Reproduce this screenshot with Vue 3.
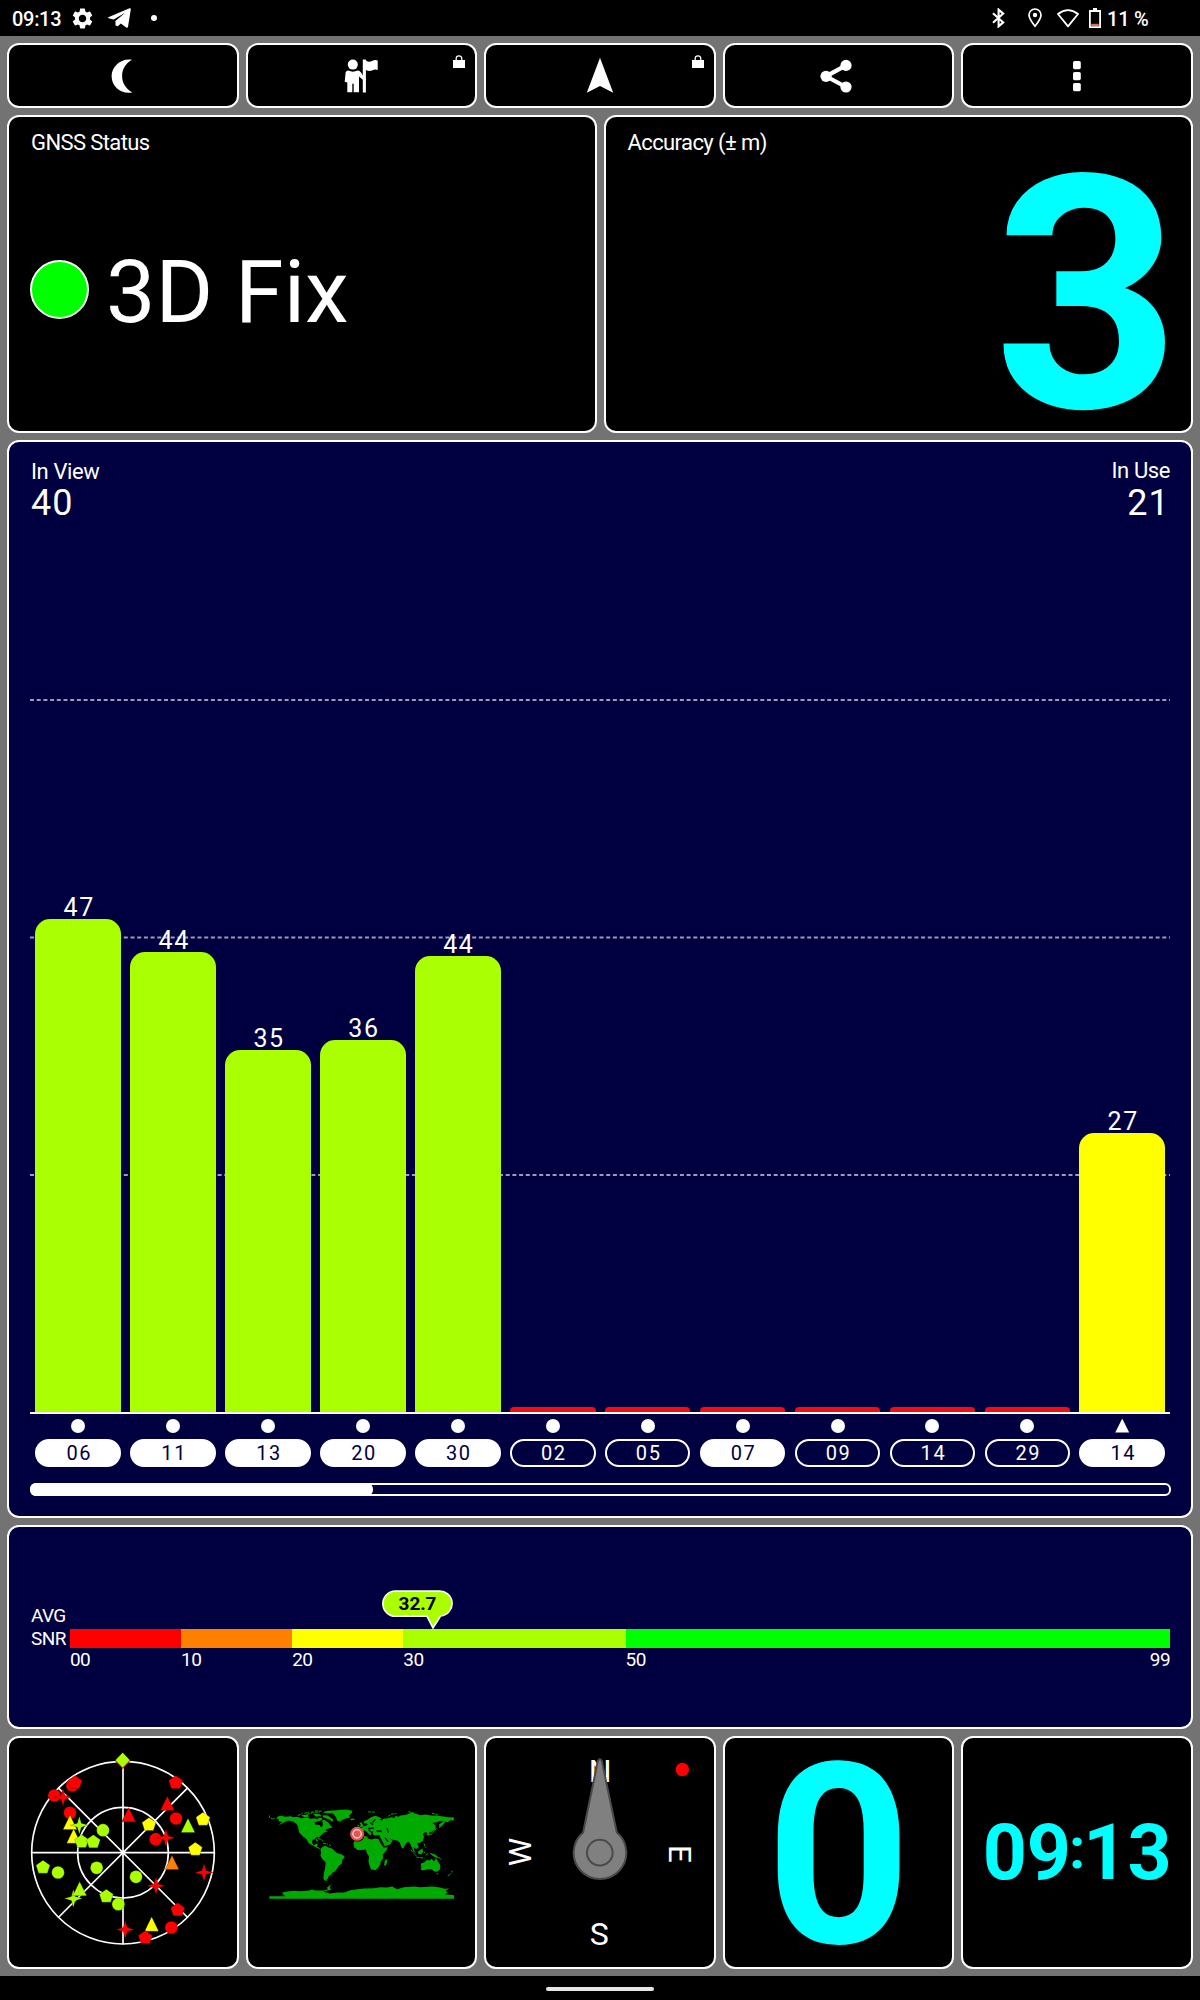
<script setup>
import { computed } from 'vue';

// satellites currently scrolled into view
const satellites = [
  { id: '06', snr: 47, height: 493, used: true },
  { id: '11', snr: 44, height: 460, used: true },
  { id: '13', snr: 35, height: 362, used: true },
  { id: '20', snr: 36, height: 372, used: true },
  { id: '30', snr: 44, height: 456, used: true },
  { id: '02', height: 5 },
  { id: '05', height: 5 },
  { id: '07', height: 5, used: true },
  { id: '09', height: 5 },
  { id: '14', height: 5 },
  { id: '29', height: 5 },
  { id: '14', snr: 27, height: 279, used: true, shape: 'tri' },
];

const gridLines = [1, 238.5, 476];

const segments = [
  { from: '00', size: 10, color: '#ff0000' },
  { from: '10', size: 10, color: '#ff8000' },
  { from: '20', size: 10, color: '#ffff00' },
  { from: '30', size: 20, color: '#aaff00' },
  { from: '50', size: 49, color: '#00ff00', to: '99' },
];

const shapes = {
  circle: 'M0-19A19 19 0 1 1 0 19A19 19 0 1 1 0-19Z',
  pent: 'M0-21L21-6L13 18H-13L-21-6Z',
  tri: 'M0-23L21 20H-21Z',
  star: 'M0-27L6-6L27 0L6 6L0 27L-6 6L-27 0L-6-6Z',
  diamond: 'M0-23L22 0L0 23L-22 0Z',
};

const R = '#ff0000';
const G = '#aaff00';
const Y = '#ffff00';

const sky = [
  ['diamond', 368, 108, R], ['diamond', 368, 105, G],
  ['circle', 217, 181, R], ['pent', 225, 172, R], ['circle', 163, 211, R], ['star', 189, 216, R],
  ['circle', 210, 263, R], ['tri', 210, 293, Y], ['tri', 221, 334, Y], ['star', 238, 300, G],
  ['circle', 309, 315, G], ['pent', 245, 349, G], ['pent', 280, 350, G], ['tri', 386, 270, R],
  ['pent', 527, 172, R], ['tri', 502, 236, R], ['circle', 528, 280, R], ['pent', 609, 282, Y],
  ['tri', 564, 302, G], ['pent', 447, 298, Y], ['circle', 467, 342, R], ['star', 498, 338, R],
  ['pent', 586, 372, Y], ['tri', 516, 413, '#ff8000'], ['star', 612, 442, R], ['star', 468, 482, R],
  ['circle', 408, 455, G], ['circle', 290, 428, G], ['circle', 174, 442, G], ['pent', 129, 426, G],
  ['star', 220, 520, G], ['tri', 239, 492, G], ['pent', 319, 513, G], ['circle', 355, 537, G],
  ['star', 376, 613, R], ['tri', 455, 598, Y], ['pent', 436, 637, R], ['circle', 514, 607, R],
  ['pent', 533, 554, R],
];

const skyMarks = computed(() => sky.map(([shape, x, y, color]) => ({
  d: shapes[shape],
  transform: `translate(${x} ${y})`,
  color,
})));

function barColor(sat) {
  if (!sat.snr) return '#f00c10';
  return sat.snr < 30 ? Y : G;
}
</script>

<template>
  <div class="screen">
    <header class="status">
      <span class="time">09:13</span>
      <svg class="s-gear" viewBox="0 0 24 24"><path fill="#fff" d="M19.14 12.94c.04-.3.06-.61.06-.94 0-.32-.02-.64-.07-.94l2.03-1.58a.49.49 0 0 0 .12-.61l-1.92-3.32a.488.488 0 0 0-.59-.22l-2.39.96c-.5-.38-1.03-.7-1.62-.94l-.36-2.54a.484.484 0 0 0-.48-.41h-3.84c-.24 0-.43.17-.47.41l-.36 2.54c-.59.24-1.13.57-1.62.94l-2.39-.96c-.22-.08-.47 0-.59.22L2.74 8.87c-.12.21-.08.47.12.61l2.03 1.58c-.05.3-.09.63-.09.94s.02.64.07.94l-2.03 1.58a.49.49 0 0 0-.12.61l1.92 3.32c.12.22.37.29.59.22l2.39-.96c.5.38 1.03.7 1.62.94l.36 2.54c.05.24.24.41.48.41h3.84c.24 0 .44-.17.47-.41l.36-2.54c.59-.24 1.13-.56 1.62-.94l2.39.96c.22.08.47 0 .59-.22l1.92-3.32c.12-.22.07-.47-.12-.61l-2.01-1.58zM12 15.6c-1.98 0-3.6-1.62-3.6-3.6s1.62-3.6 3.6-3.6 3.6 1.62 3.6 3.6-1.62 3.6-3.6 3.6z"/></svg>
      <svg class="s-plane" viewBox="0 0 23 20"><path fill="#fff" d="M.3 9.2L21.5.3Q23 0 22.8 1.4L20 18.8Q19.6 20.2 18.3 19.4L12.8 15.4L9.8 18.3L7.6 17.4L7.4 13L17.5 4.4L5.7 11.6L.5 10.2Q-.2 9.7.3 9.2Z"/></svg>
      <i class="s-dot"></i>
      <span class="grow"></span>
      <svg class="s-bt" viewBox="0 0 13 20"><path fill="none" stroke="#fff" stroke-width="2.1" d="M1 5.2L11.2 14.4L6.6 18.4V1.6L11.2 5.6L1 14.8"/></svg>
      <svg class="s-pin" viewBox="0 0 14 20"><path fill="none" stroke="#fff" stroke-width="1.7" d="M7 18.2C4 14.5 1 10.7 1 7A6 6 0 0 1 13 7C13 10.7 10 14.5 7 18.2Z"/><circle cx="7" cy="7" r="2.2" fill="#fff"/></svg>
      <svg class="s-wifi" viewBox="0 0 22 19"><path fill="none" stroke="#fff" stroke-width="1.8" stroke-linejoin="round" d="M1 5Q11-2.8 21 5L11 17.4Z"/></svg>
      <svg class="s-bat" viewBox="0 0 12 20"><path fill="#fff" d="M4 0H8V2H12V20H0V2H4ZM1.8 4V18.2H10.2V4Z"/><rect x="2.2" y="15.8" width="7.6" height="2.2" fill="#d9705a"/></svg>
      <span class="battery">11 %</span>
    </header>

    <main class="board">
      <nav class="row five">
        <button class="panel tool">
          <svg class="icon" viewBox="-24 -24 48 48"><path d="M9-16.2C-2.6-18-11.4-9-11.4.2C-11.4 10.4-2 18.4 9.2 16.4C2.2 12.2-.9 6.4-.9 0S2.2-12.2 9-16.2Z"/></svg>
        </button>
        <button class="panel tool">
          <svg class="icon" viewBox="-24 -24 48 48">
            <circle cx="-8.2" cy="-11.4" r="5"/>
            <path d="M-12.8-5.4Q-8-3.2-3.5-5.4Q-1.2-5.4.2-3.2L1.8-.5V-16.5H4.9V-15.6Q8-13.4 11-15Q14-16.6 16.7-15.4V-6Q14-7.2 11-5.4Q8-4.4 4.9-6V2.2Q5.4 3.2 4.9 4V16.4H1.8V3.8L-2 .4V16.2H-7.3V7.8H-8.7V16.2H-13.7V6.4L-16.3 5.8L-15.4-3.5Q-14.7-5.4-12.8-5.4Z"/>
          </svg>
          <svg class="lock" viewBox="0 0 12 13"><path d="M0 5H12V13H0Z"/><path class="shackle" d="M3.2 6V3.7Q3.2.8 6 .8T8.8 3.7V6"/></svg>
        </button>
        <button class="panel tool">
          <svg class="icon" viewBox="-24 -24 48 48"><path d="M0-18.2L13.2 16.8L0 10L-13.2 16.8Z"/></svg>
          <svg class="lock" viewBox="0 0 12 13"><path d="M0 5H12V13H0Z"/><path class="shackle" d="M3.2 6V3.7Q3.2.8 6 .8T8.8 3.7V6"/></svg>
        </button>
        <button class="panel tool">
          <svg class="icon" viewBox="-24 -24 48 48">
            <path class="line" d="M7-10.6L-13 .3L7 11"/>
            <circle cx="7" cy="-10.6" r="5.6"/><circle cx="-13" cy=".3" r="5.6"/><circle cx="7" cy="11" r="5.6"/>
          </svg>
        </button>
        <button class="panel tool">
          <svg class="icon" viewBox="-24 -24 48 48">
            <rect x="-4" y="-15" width="7.8" height="8.2" rx="1.6"/><rect x="-4" y="-4" width="7.8" height="8.2" rx="1.6"/><rect x="-4" y="7" width="7.8" height="8.2" rx="1.6"/>
          </svg>
        </button>
      </nav>

      <section class="row two">
        <div class="panel gnss">
          <div class="label">GNSS Status</div>
          <div class="fix"><i class="lamp"></i><span>3D Fix</span></div>
        </div>
        <div class="panel accuracy">
          <div class="label">Accuracy (± m)</div>
          <div class="metres">3</div>
        </div>
      </section>

      <section class="panel navy sats">
        <div class="counts">
          <div>
            <div class="c-label">In View</div>
            <div class="c-num">40</div>
          </div>
          <div class="right">
            <div class="c-label use">In Use</div>
            <div class="c-num">21</div>
          </div>
        </div>

        <div class="chart">
          <svg class="grid" viewBox="0 0 1140 712" preserveAspectRatio="none">
            <line v-for="y in gridLines" :key="y" x1="0" x2="1140" :y1="y" :y2="y"/>
          </svg>
          <div v-for="(s, i) in satellites" :key="i" class="col">
            <span v-if="s.snr" class="val">{{ s.snr }}</span>
            <div class="bar" :class="{ empty: !s.snr }" :style="{ height: s.height + 'px', background: barColor(s) }"></div>
          </div>
        </div>

        <div class="ids">
          <div v-for="(s, i) in satellites" :key="i" class="sat">
            <i :class="s.shape || 'dot'"></i>
            <span class="pill" :class="{ used: s.used }">{{ s.id }}</span>
          </div>
        </div>

        <div class="scroll"><div class="thumb"></div></div>
      </section>

      <section class="panel navy snr">
        <div class="snr-name"><div>AVG</div><div>SNR</div></div>
        <div class="scale">
          <div class="balloon">
            <svg viewBox="0 0 72 40"><path d="M14.5 1H57.5A12.5 12.5 0 0 1 59.6 26L52 37.8L46 26.3H14.5A12.6 12.6 0 0 1 14.5 1Z"/></svg>
            <span>32.7</span>
          </div>
          <div v-for="g in segments" :key="g.from" class="seg" :style="{ flexGrow: g.size }">
            <div class="fill" :style="{ background: g.color }"></div>
            <div class="ticks"><span>{{ g.from }}</span><span v-if="g.to">{{ g.to }}</span></div>
          </div>
        </div>
      </section>

      <section class="row five">
        <div class="panel tile">
          <svg viewBox="27 38.5 682.8 687">
            <g class="radar">
              <circle cx="369" cy="382.5" r="274"/><circle cx="369" cy="382.5" r="136"/>
              <path d="M369 108V657M95 382.5H643M175 188L563 577M563 188L175 577"/>
            </g>
            <path v-for="(m, i) in skyMarks" :key="i" class="mark" :d="m.d" :transform="m.transform" :fill="m.color"/>
          </svg>
        </div>

        <div class="panel tile">
          <svg viewBox="22.8 38.5 682.8 687">
            <g class="land">
              <path d="M108 280L112 274L122 272L135 275L152 273L158 276L172 275L182 279L200 277L210 281L222 279L230 282L238 277L246 280L243 286L232 288L222 292L226 299L236 299L243 306L247 300L247 293L244 287L252 284L258 288L266 294L271 302L276 307L262 311L254 315L262 319L250 323L244 329L235 336L229 341L232 347L231 352L225 343L217 344L215 353L220 360L228 356L232 357L230 365L236 368L243 373L232 369L222 364L210 357L203 352L200 344L187 333L176 322L173 305L168 296L158 289L145 286L135 289L122 297L114 299L126 291L114 288L116 283Z"/>
              <path d="M245 261L262 257L290 255L310 253L322 254L336 257L334 264L325 272L331 276L314 281L303 286L298 290L290 286L287 276L278 265L262 264Z"/>
              <path d="M246 270L262 271L270 277L280 284L275 290L268 284L256 279L248 276ZM182 270L200 268L207 274L192 276ZM218 266L238 267L244 273L226 274Z"/>
              <path d="M240 372L247 364L256 362L262 366L275 370L284 378L288 383L304 388L312 393L310 400L305 406L304 416L296 421L290 430L284 438L276 443L272 449L264 454L263 460L258 464L263 467L252 466L249 460L250 445L254 430L256 412L247 403L240 392L242 382Z"/>
              <path d="M342 348L349 340L352 334L370 332L380 334L383 340L392 343L404 340L414 341L419 353L427 363L430 367L442 366L438 376L427 388L428 400L421 408L420 418L411 430L404 435L392 433L387 420L384 408L386 395L379 383L377 374L366 374L352 375L341 366L339 355ZM433 407L441 401L440 412L436 422L431 420Z"/>
              <path d="M345 332L344 322L356 322L360 315L352 311L362 309L371 303L380 300L382 297L376 294L372 296L370 289L382 283L392 276L404 272L414 275L424 281L416 284L424 286L430 280L440 280L452 276L463 278L466 272L474 275L480 271L488 270L500 268L512 263L528 266L540 270L556 268L572 271L590 272L610 274L625 276L641 277L640 286L630 285L622 291L616 289L606 300L597 309L596 298L610 288L600 287L588 292L576 293L586 302L585 312L574 320L566 321L568 330L562 330L560 322L552 322L547 327L551 334L548 346L540 352L530 355L535 364L530 371L524 370L519 365L522 376L527 384L520 380L514 366L508 353L503 350L494 358L489 371L483 366L478 352L470 346L456 344L446 338L456 347L450 357L432 363L424 350L417 337L420 331L410 330L401 331L396 325L399 319L391 318L388 314L383 314L394 325L389 331L378 319L372 316L366 322L358 330L350 334Z"/>
              <path d="M356 306L361 300L357 293L363 291L368 300L370 305ZM350 302L356 299L355 305ZM330 281L342 280L342 284L332 285Z"/>
              <path d="M541 416L552 411L560 404L568 406L572 401L582 408L587 398L592 408L600 420L599 432L590 440L580 438L574 432L560 432L548 436L541 434L543 426ZM588 444L594 444L591 449ZM532 380L546 370L548 380L543 387L534 386ZM568 383L584 388L598 399L586 397L574 390Z"/>
              <path d="M87 513L134 513L124 503L140 499L160 497L180 498L207 496L215 493L225 496L250 496L262 493L260 487L272 479L268 487L272 494L248 499L268 505L290 502L312 502L330 495L350 492L370 490L400 489L420 486L440 487L455 484L470 492L490 486L520 484L540 486L575 484L600 487L612 491L627 490L616 496L622 502L614 507L630 509L641 510L641 521L87 521Z"/>
            </g>
            <path class="coast" d="M87 271V277L96 281L104 279M172 271L186 265M192 264L206 261M200 268L216 263M212 261H238M224 257L244 258M232 340L243 343L248 349M248 354L262 357M266 358L272 362M383 260L404 261M443 274L452 267L468 265M504 260L520 263M575 265L592 268M558 329L574 327L580 318M582 316L590 308M602 302L606 291M551 355L555 368M511 374L518 382L529 393M528 396L552 399M550 384L554 380M556 390L562 384M622 453L630 447L634 444M633 437L638 441M596 396L602 404M262 488L273 478"/>
            <path class="sea" d="M418 338L431 362M434 338L444 350M408 317L424 319M440 309L444 323M397 292L405 282M224 342L232 336M384 310L400 309M390 293L398 298"/>
            <circle cx="352" cy="329" r="21" fill="#4a0e0e"/>
            <circle cx="350" cy="326" r="21" fill="#e15656"/>
            <circle cx="350" cy="326" r="12.5" fill="#e15656" stroke="#fff" stroke-width="3"/>
          </svg>
        </div>

        <div class="panel tile">
          <svg viewBox="18.6 38.5 682.8 687">
            <g class="compass">
              <text x="361" y="172">N</text>
              <text x="358" y="660">S</text>
              <text transform="translate(568 386) rotate(90)">E</text>
              <text transform="translate(153 381) rotate(-90)">W</text>
            </g>
            <circle cx="607.5" cy="133" r="20" fill="#f00"/>
            <path class="needle" d="M354 108Q360 97 366 108L411 322A79 79 0 1 1 310 322Z"/>
            <circle class="needle" cx="360" cy="382.5" r="38.5"/>
          </svg>
        </div>

        <div class="panel tile speed"><span>0</span></div>
        <div class="panel tile clock"><span>09</span><span class="colon">:</span><span>13</span></div>
      </section>
    </main>

    <footer class="navbar"><i></i></footer>
  </div>
</template>

<style>
body { margin: 0; background: #000; }
</style>

<style scoped>
* { box-sizing: border-box; }
.screen { width: 1200px; height: 2000px; display: flex; flex-direction: column; overflow: hidden; background: #000; color: #fff; font-family: Roboto, "Liberation Sans", sans-serif; }
svg { display: block; }
i { display: block; }

/* Status bar */
.status { height: 36px; flex: none; display: flex; align-items: center; padding: 0 51px 0 12px; font-size: 20px; font-weight: 500; }
.time { width: 59px; line-height: 36px; padding-top: 2px; letter-spacing: -.3px; }
.battery { width: 42px; margin-left: 6px; padding-top: 2px; white-space: nowrap; letter-spacing: -.2px; }
.grow { flex: 1; }
.s-gear { width: 25px; height: 25px; margin-left: -1px; }
.s-plane { width: 23px; height: 20px; margin-left: 13px; }
.s-dot { width: 6px; height: 6px; border-radius: 50%; background: #fff; margin-left: 20px; }
.s-bt { width: 13px; height: 20px; margin-right: 23px; }
.s-pin { width: 14px; height: 20px; margin-right: 15px; }
.s-wifi { width: 22px; height: 19px; margin-right: 10px; }
.s-bat { width: 12px; height: 20px; }

/* Board */
.board { height: 1940px; flex: none; background: #737373; padding: 7px; display: grid; grid-template-columns: 100%; grid-template-rows: 65px 317.5px 1078.5px 204px 233px; gap: 7px; }
.row { display: grid; gap: 7px; }
.five { grid-template-columns: repeat(5, minmax(0, 1fr)); }
.two { grid-template-columns: repeat(2, minmax(0, 1fr)); }
.panel { background: #000; border: 2px solid #fff; border-radius: 12px; min-width: 0; min-height: 0; }
.navy { background: #000040; }

/* Toolbar */
.tool { position: relative; display: flex; align-items: center; justify-content: center; padding: 0; }
.icon { width: 48px; height: 48px; fill: #fff; }
.icon .line { fill: none; stroke: #fff; stroke-width: 4.2; }
.lock { position: absolute; top: 10px; right: 10px; width: 12px; height: 13px; fill: #fff; }
.lock .shackle { fill: none; stroke: #fff; stroke-width: 1.3; }

/* GNSS and accuracy */
.label { font-size: 22px; line-height: 26px; letter-spacing: -.6px; padding: 13px 0 0 22px; }
.fix { display: flex; align-items: center; padding-left: 21px; height: 104px; margin-top: 82px; font-size: 88px; line-height: 104px; }
.fix span { margin-top: 4px; }
.lamp { width: 59px; height: 59px; border: 2px solid #fff; border-radius: 50%; background: #0f0; margin: -1px 17px 0 0; }
.metres { color: #0ff; font-size: 326px; line-height: 270px; height: 270px; font-weight: 700; text-align: right; padding-right: 10.5px; margin-top: 4.5px; }

/* Satellite chart */
.sats { padding: 0 21px; display: flex; flex-direction: column; }
.counts { display: flex; justify-content: space-between; height: 257.5px; padding: 17.5px 0 0 1px; }
.c-label { font-size: 22px; line-height: 26px; letter-spacing: -.4px; }
.c-num { font-size: 36px; line-height: 36px; letter-spacing: 1px; }
.right { text-align: right; }
.right .c-num { letter-spacing: 1.2px; }
.use { margin-top: -1px; margin-bottom: 1px; }
.chart { position: relative; display: flex; align-items: flex-end; height: 714.5px; border-bottom: 2px solid #fff; padding: 0 .4px 0 .8px; }
.grid { position: absolute; top: 0; left: 0; width: 100%; height: 712px; }
.grid line { stroke: #9c9cb8; stroke-width: 2; stroke-dasharray: 4 2.7; }
.col { position: relative; flex: 1 1 0; display: flex; flex-direction: column; align-items: center; }
.val { font-size: 25px; line-height: 26px; letter-spacing: 1.6px; padding-left: 2px; margin-bottom: -2px; }
.bar { width: 85.6px; border-radius: 15px 15px 0 0; }
.bar.empty { border-radius: 4px 4px 0 0; }
.ids { display: flex; height: 69px; padding: 5px .4px 0 .8px; }
.sat { flex: 1 1 0; display: flex; flex-direction: column; align-items: center; gap: 6px; }
.dot { width: 14px; height: 14px; border-radius: 50%; background: #fff; }
.tri { width: 14px; height: 14px; background: #fff; clip-path: polygon(50% 0, 100% 100%, 0 100%); }
.pill { width: 85.6px; height: 28px; border: 2px solid #fff; border-radius: 14px; text-align: center; font-size: 20px; line-height: 25px; letter-spacing: 1.6px; padding-left: 2px; }
.pill.used { background: #fff; color: #000040; }
.scroll { height: 13px; border: 2px solid #fff; border-radius: 6px; margin: 0 -.5px; }
.thumb { width: 343px; height: 13px; margin: -2px; border-radius: 6px; background: #fff; }

/* SNR scale */
.snr { display: flex; padding: 0 21px 0 22px; font-size: 19px; }
.snr-name { width: 39px; line-height: 23px; padding-top: 76.5px; letter-spacing: -.6px; }
.scale { position: relative; flex: 1; display: flex; padding-top: 102px; }
.seg { flex: 1 1 0; }
.fill { height: 19px; }
.ticks { display: flex; justify-content: space-between; line-height: 24px; letter-spacing: -.6px; }
.balloon { position: absolute; left: 311px; top: 63px; width: 72px; height: 40px; }
.balloon svg { width: 72px; height: 40px; fill: #aaff00; stroke: #fff; stroke-width: 1.6; }
.balloon span { position: absolute; left: 1px; top: 1px; width: 71px; text-align: center; color: #000; font-weight: 700; line-height: 26px; letter-spacing: -.1px; }

/* Bottom tiles */
.tile svg { width: 100%; height: 100%; }
.radar { fill: none; stroke: #fff; stroke-width: 5; }
.mark { stroke: rgba(0, 0, 0, .3); stroke-width: 2; }
.land { fill: #00aa00; }
.coast { fill: none; stroke: #00aa00; stroke-width: 3; stroke-dasharray: 9 2; }
.sea { fill: none; stroke: #000; stroke-width: 4; }
.compass { fill: #fff; font-size: 96px; text-anchor: middle; }
.needle { fill: #808080; stroke: #4a4a4a; stroke-width: 6; }
.speed, .clock { display: flex; align-items: center; justify-content: center; color: #0ff; font-weight: 700; }
.speed { font-size: 253px; line-height: 229px; padding-top: 4px; }
.speed span { height: 225px; }
.clock { font-size: 77px; padding-top: 1px; }
.colon { font-size: 58px; line-height: 77px; margin: 0 -2px; padding-bottom: 10px; }

.navbar { flex: 1; display: flex; justify-content: center; padding-top: 11px; }
.navbar i { width: 108px; height: 4px; border-radius: 2px; background: #e6e6e6; }
</style>
